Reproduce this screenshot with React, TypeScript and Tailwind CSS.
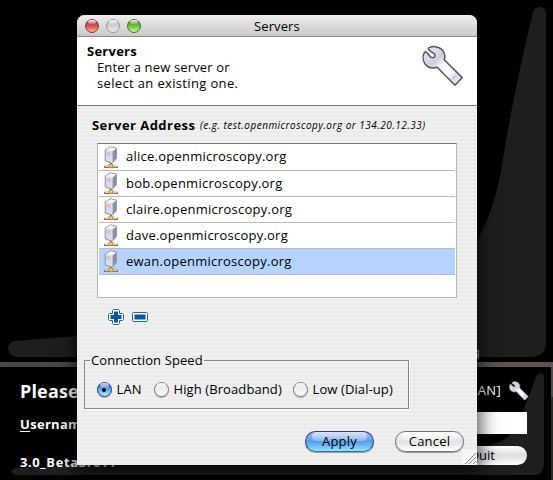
import React from "react";

const servers = ["alice", "bob", "claire", "dave", "ewan"];

function Wrench({ size, outline }: { size: number; outline: string }) {
  return (
    <svg width={size} height={size} viewBox="0 0 42 42" className="block shrink-0">
      <defs>
        <linearGradient id="steel" x1="0" y1="0" x2="1" y2="1">
          <stop offset="0" stopColor="#e8e8f4" />
          <stop offset=".35" stopColor="#cfcfdf" />
          <stop offset=".5" stopColor="#ffffff" />
          <stop offset=".72" stopColor="#f6f6fc" />
          <stop offset=".78" stopColor="#dcdce9" />
          <stop offset="1" stopColor="#e9e9f4" />
        </linearGradient>
      </defs>
      <path
        d="M7.2 2.6C11 .8 16.5 1.2 20 4.6C22.8 7.6 23.4 11.4 22.2 14.8L40.2 32.6L33 40.2L15.2 22.2C10.4 23.8 5.8 22.4 3 19C.6 15.6 .7 10.6 2.6 7.2Q4 6 5 7.8L8.8 12.2Q10.4 13.4 12.2 12.2Q13.6 10.6 12.6 9L7.2 5.2Q5.6 3.8 7.2 2.6Z"
        fill="url(#steel)"
        stroke={outline}
        strokeWidth="1.5"
        strokeLinejoin="round"
      />
      <circle cx="33" cy="33" r="2" fill="#b9b9cf" />
      <circle cx="33.7" cy="33.5" r="1.2" fill="#f4f4ff" />
    </svg>
  );
}

function ServerIcon() {
  return (
    <svg width="14" height="23" viewBox="0 0 14 23" className="block shrink-0">
      <path d="M7 16v3" stroke="#777" strokeWidth="2" />
      <path d="M.8 20.9h12.4" stroke="#77736d" strokeWidth="2.2" strokeLinecap="round" />
      <path d="M1 20.5h12" stroke="#d8d2cb" strokeWidth="1" />
      <rect x="5" y="18.4" width="4" height="3.4" fill="#f79a1c" stroke="#c9822c" strokeWidth=".6" />
      <rect x="6" y="18.8" width="2" height="1.6" fill="#ffe07a" />
      <path d="M1.2 4.2L6.6 .8L12.4 2.2V12.6L8.2 17.4L1.2 14.8Z" fill="#dcdce8" stroke="#85858f" strokeWidth=".9" />
      <path d="M8.6 5.4L12.2 2.6V12.5L8.6 16.6Z" fill="#8f90a6" />
      <path d="M1.8 4.2L6.7 1.3L11.8 2.5L8.4 5.3Z" fill="#f4f4fa" />
      <path d="M2.7 6.5l3.8 1.1M2.7 8.4l3.8 1.1" stroke="#aaaabf" strokeWidth=".8" />
    </svg>
  );
}

function Light({ tone }: { tone: string }) {
  return (
    <span className={`relative block h-[14px] w-[14px] rounded-full border ${tone}`}>
      <span className="absolute left-[2px] top-0 h-[4px] w-[8px] rounded-full bg-linear-to-b from-white/90 to-white/20" />
    </span>
  );
}

function Radio({ label, checked, gap }: { label: string; checked?: boolean; gap: string }) {
  return (
    <label className={`flex items-center ${gap}`}>
      <span
        className={`relative mr-[5px] block h-[15px] w-[15px] shrink-0 rounded-full border shadow-[0_1px_1px_rgba(0,0,0,.3)] ${
          checked
            ? "border-[#24398c] bg-linear-to-b from-[#3340b4] via-[#5cacf0] to-[#a4f0ff]"
            : "border-[#777] bg-linear-to-b from-[#dedede] via-[#f0f0f0] to-white"
        }`}
      >
        <span className="absolute left-[2px] top-0 h-[5px] w-[9px] rounded-full bg-linear-to-b from-white/80 to-white/20" />
        {checked && <span className="absolute left-[4.5px] top-[4.5px] h-[4px] w-[4px] rounded-full bg-black" />}
      </span>
      <span className="whitespace-nowrap tracking-[.1px]">{label}</span>
    </label>
  );
}

function Backdrop() {
  return (
    <svg width="553" height="480" className="absolute inset-0">
      <defs>
        <linearGradient id="edge">
          <stop offset="0" stopColor="#4b473f" />
          <stop offset=".6" stopColor="#584e48" />
          <stop offset="1" stopColor="#625353" />
        </linearGradient>
      </defs>
      <path
        d="M14 341L77 336C250 331 405 325 477 240Q495 210 503 159Q514 90 533 12Q535 7 540 7Q546 8 546 14V342Q546 356 532 357H16Q8 355 8 348Q8 343 14 341Z"
        fill="#1e1e1e"
      />
      <rect y="362" width="553" height="5" fill="url(#edge)" />
      <rect x="551" y="367" width="2" height="30" fill="#554949" />
      <rect x="551" y="397" width="2" height="83" fill="#292727" />
      <path
        d="M16 468L90 465C310 462 475 459 505 439Q522 427 525 406L537 375Q539 373 542 373Q544 374 544 377V464Q544 474 535 475H17Q11 474 11 470Z"
        fill="#1e1e1e"
      />
    </svg>
  );
}

function Login() {
  return (
    <div className="absolute left-0 top-[367px] flex h-[113px] w-[551px] justify-between pl-5 pr-6 text-white">
      <div className="flex flex-col font-bold">
        <div className="mt-[10px] h-[28px] text-[18px] leading-[28px] tracking-[.15px]">Please log in</div>
        <div className="mt-[9px] h-5 text-[13px] leading-5 tracking-[.3px]"><span className="underline underline-offset-2">U</span>sername</div>
        <div className="mt-[18px] h-5 text-[13px] leading-5 tracking-[.6px]">3.0_Beta3rc11</div>
      </div>
      <div className="flex w-[100px] flex-col items-end">
        <div className="mt-[13px] flex h-[22px] items-center gap-2 text-[13px]">
          <span className="tracking-[.3px]">[LAN]</span>
          <span className="-mr-[2px]"><Wrench size={20} outline="#a9a9b5" /></span>
        </div>
        <div className="mt-[10px] h-[22px] w-full bg-white" />
        <div className="mt-[12px] flex h-[19px] w-[78px] items-center justify-center rounded-full bg-linear-to-b from-white via-[#dedede] to-white pr-[12px] text-[13px] text-black">Quit</div>
      </div>
    </div>
  );
}

function AquaButton({ label, primary }: { label: string; primary?: boolean }) {
  return (
    <button
      className={`relative flex h-[21px] w-[69px] items-center justify-center rounded-full border text-[13px] shadow-[0_1px_1px_rgba(0,0,0,.35)] ${
        primary
          ? "border-[#343b91] border-b-[#416b96] bg-linear-to-b from-[#a9b6e8] via-[#559ee9] to-[#8ce4ff]"
          : "border-[#707070] bg-linear-to-b from-[#fafafa] via-[#e2e2e2] to-white"
      }`}
    >
      <span className="absolute inset-x-[6px] top-0 h-[9px] rounded-full bg-linear-to-b from-white/60 to-white/25" />
      <span className="relative tracking-[.2px]">{label}</span>
    </button>
  );
}

function Dialog() {
  return (
    <div className="absolute left-[77px] top-[15px] flex h-[450px] w-[400px] flex-col overflow-hidden rounded-t-[8px] bg-[repeating-linear-gradient(to_bottom,#ebebeb_0px,#ebebeb_2px,#f0f0f0_2px,#f0f0f0_4px)] text-[13px] text-black">
      <div className="flex h-[22px] shrink-0 items-center gap-[7px] border-b border-[#8b8b8b] bg-linear-to-b from-[#eeeeee] to-[#c9c9c9] pl-2">
        <Light tone="border-[#79403e] bg-linear-to-b from-[#a93636] via-[#d65351] to-[#ffaaa5]" />
        <Light tone="border-[#999] bg-linear-to-b from-[#bbb] via-[#d2d2d2] to-[#eee]" />
        <Light tone="border-[#476b32] bg-linear-to-b from-[#458724] via-[#72bd42] to-[#c0ff87]" />
        <span className="ml-[106px] pt-[2px] text-[13px] tracking-[.1px]">Servers</span>
      </div>
      <div className="flex h-[69px] shrink-0 justify-between border-b border-[#777] bg-white pl-[10px] pr-[13px]">
        <div className="pt-[6px] leading-4">
          <div className="font-bold tracking-[.25px]">Servers</div>
          <div className="pl-[10px] tracking-[.15px]">Enter a new server or</div>
          <div className="pl-[10px] tracking-[.35px]">select an existing one.</div>
        </div>
        <div className="pt-[8px]"><Wrench size={42} outline="#55555b" /></div>
      </div>
      <div className="flex h-[37px] shrink-0 items-center pl-[15px] pt-[2px]">
        <span className="w-[108px] whitespace-nowrap font-bold tracking-[.45px]">Server Address</span>
        <span className="whitespace-nowrap text-[10px] italic tracking-[.48px]">(e.g. test.openmicroscopy.org or 134.20.12.33)</span>
      </div>
      <div className="ml-5 h-[155px] w-[360px] shrink-0 border border-[#b8b8b8] border-t-[#777] bg-white px-px">
        {servers.map((name) => (
          <div key={name} className={`flex h-[26px] items-center border-b border-[#bbb] pl-[5px] first:h-[27px] ${name === "ewan" ? "bg-[#b4d4ff]" : ""}`}>
            <ServerIcon />
            <span className="ml-2 tracking-[.24px]">{name}.openmicroscopy.org</span>
          </div>
        ))}
      </div>
      <div className="ml-[31px] mt-[11px] flex h-4 shrink-0 items-center gap-2">
        <svg width="16" height="16" viewBox="0 0 16 16">
          <path d="M5.5 .5h5l1 1v3h3l1 1v5l-1 1h-3v3l-1 1h-5l-1-1v-3h-3l-1-1v-5l1-1h3v-3Z" fill="#fff" stroke="#2464a9" />
          <path d="M6 2.5h4v3.5h3.5v4H10v3.5H6V10H2.5V6H6Z" fill="#0754a8" />
        </svg>
        <svg width="16" height="10" viewBox="0 0 16 10">
          <rect x=".5" y=".5" width="15" height="9" rx="1" fill="#fff" stroke="#2464a9" />
          <rect x="2.5" y="2.5" width="11" height="5" fill="#0754a8" />
        </svg>
      </div>
      <fieldset className="ml-[7px] mt-[26px] h-[58px] w-[325px] shrink-0 border border-[#888] px-[5px] shadow-[1px_1px_0_white]">
        <legend className="h-[18px] px-px leading-[18px] tracking-[.1px]">Connection Speed</legend>
        <div className="flex h-[41px] items-center pl-[6.5px]">
          <Radio label="LAN" checked gap="w-[57px]" />
          <Radio label="High (Broadband)" gap="w-[139px]" />
          <Radio label="Low (Dial-up)" gap="" />
        </div>
      </fieldset>
      <div className="ml-[228px] mt-[22px] flex shrink-0 gap-[21px]">
        <AquaButton label="Apply" primary />
        <AquaButton label="Cancel" />
      </div>
      <svg width="15" height="15" className="absolute bottom-0 right-0">
        <rect width="15" height="15" fill="#f6f6f6" />
        <path d="M3 14L14 3M7 14L14 7M11 14L14 11" stroke="#888" />
      </svg>
    </div>
  );
}

export default function App() {
  return (
    <main className="relative h-[480px] w-[553px] overflow-hidden bg-black font-['Open_Sans','Noto_Sans',sans-serif]">
      <Backdrop />
      <Login />
      <span className="absolute left-[473px] top-[344px] font-['Noto_Sans',sans-serif] text-[11px] leading-4 text-[#bbb]">g</span>
      <div className="absolute left-[77px] top-[25px] h-[440px] w-[400px] shadow-[0_6px_18px_3px_rgba(0,0,0,.7)]" />
      <Dialog />
    </main>
  );
}
